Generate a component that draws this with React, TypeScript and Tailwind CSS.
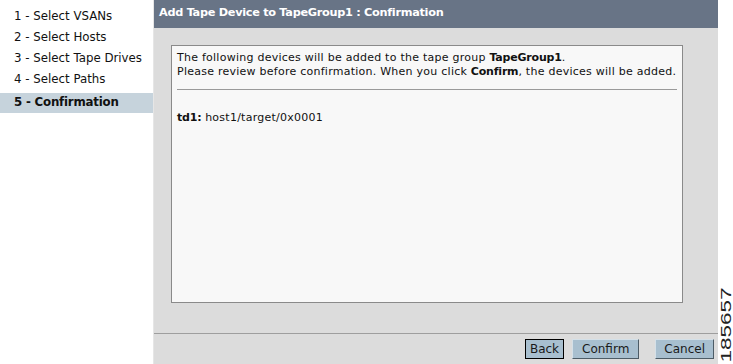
const STEPS = ["1 - Select VSANs", "2 - Select Hosts", "3 - Select Tape Drives", "4 - Select Paths", "5 - Confirmation"]

const font = "font-['DejaVu_Sans',Verdana,sans-serif]"

function Btn({ label, focused, className = "" }: { label: string; focused?: boolean; className?: string }) {
  return (
    <button
      type="button"
      className={
        "h-[20px] bg-[#a8bfcf] text-[12px] leading-none text-[#1a1a1a] border " +
        (focused
          ? "border-black px-[4px] "
          : "border-t-[#d4e0e8] border-l-[#d4e0e8] border-b-[#4d5c66] border-r-[#4d5c66] ") +
        className
      }
    >
      {label}
    </button>
  )
}

export default function App() {
  return (
    <div className={"flex h-[364px] w-[733px] overflow-hidden bg-white " + font}>
      <div className="w-[154px] shrink-0 border-r border-[#e6e6e6] pt-[6px] text-[11.8px] text-[#111]">
        {STEPS.map((s, i) => {
          const last = i === STEPS.length - 1
          return (
            <div
              key={s}
              className={
                last
                  ? "mt-[3px] flex h-[20px] items-center bg-[#c6d3dc] pl-[14px] font-bold tracking-[-0.2px]"
                  : "flex h-[21px] items-center pl-[14px]"
              }
            >
              {s}
            </div>
          )
        })}
      </div>

      <div className="flex w-[564px] shrink-0 flex-col bg-[#dcdcdc]">
        <div className="flex h-[28px] items-center bg-[#687486] pb-px pl-[5px] text-[11.3px] font-bold tracking-[-0.3px] text-white">
          Add Tape Device to TapeGroup1 : Confirmation
        </div>

        <div className="flex-1 pl-[17px] pr-[35px] pt-[17px] pb-[30px]">
          <div className="h-full whitespace-nowrap border border-[#8a8a8a] bg-[#f8f8f8] px-[5px] pt-[5px] text-[11px] leading-[14px] tracking-[0.25px] text-[#111]">
            <p>
              The following devices will be added to the tape group <b className="tracking-[-0.2px]">TapeGroup1</b>.
            </p>
            <p>
              Please review before confirmation. When you click <b className="tracking-[-0.2px]">Confirm</b>, the devices will be added.
            </p>
            <div className="mt-[10px] h-px bg-[#9a9a9a]" />
            <p className="mt-[21px]">
              <b className="tracking-[-0.2px]">td1:</b> host1/target/0x0001
            </p>
          </div>
        </div>

        <div className="flex h-[31px] items-center justify-end gap-[8px] border-t border-[#9e9e9e] pr-[4px]">
          <Btn label="Back" focused />
          <Btn label="Confirm" className="px-[9px]" />
          <Btn label="Cancel" className="ml-[8px] px-[8px]" />
        </div>
      </div>

      <div className="flex flex-1 items-end justify-center pb-[14px]">
        <span className="rotate-180 scale-y-[1.5] font-['Liberation_Sans',Arial,sans-serif] text-[15px] leading-none text-[#222] [writing-mode:vertical-rl]">
          185657
        </span>
      </div>
    </div>
  )
}
